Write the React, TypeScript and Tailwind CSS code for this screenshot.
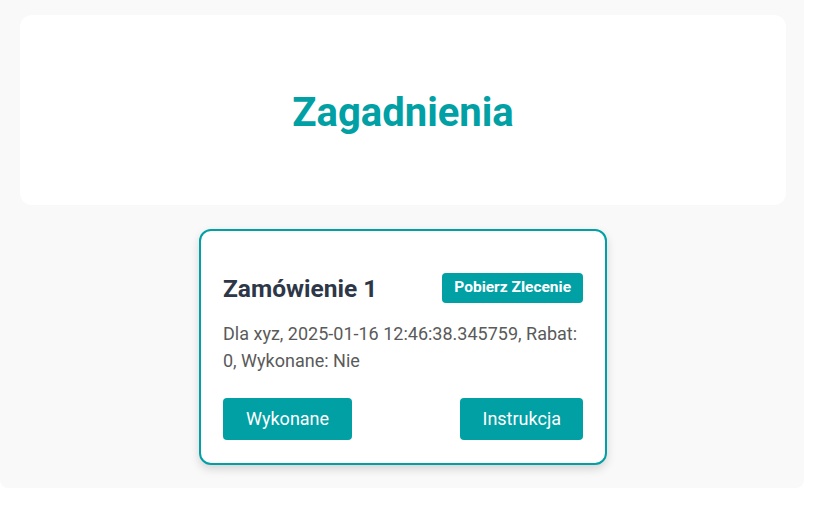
import React from "react";

export default function App() {
  return (
    <div className="w-[818px] h-[509px] bg-white" style={{ fontFamily: "Roboto, 'Noto Sans', sans-serif" }}>
      <div className="w-[804px] h-[488px] bg-[#f9f9f9] rounded-b-lg pt-[15px] pl-[20px] pr-[18px] flex flex-col items-center">
        <div className="w-full h-[190px] bg-white rounded-xl flex items-center justify-center">
          <h1 className="text-[40px] font-bold text-[#00a0a4] leading-none mt-[6px]">Zagadnienia</h1>
        </div>
        <div className="mt-[24px] w-[408px] h-[236px] bg-white border-2 border-[#00a0a4] rounded-xl shadow-[0_4px_10px_rgba(0,0,0,0.15)] px-[22px] pt-[42px]">
          <div className="flex items-center justify-between h-[30px]">
            <h2 className="text-[24.5px] font-bold text-[#2d3748] leading-none mt-[2px]">Zamówienie 1</h2>
            <button className="h-[30px] px-[12px] bg-[#00a0a4] text-white text-[15.5px] font-bold rounded-[4px] leading-none">
              Pobierz Zlecenie
            </button>
          </div>
          <p className="mt-[17px] text-[18px] leading-[27px] text-[#5a5a5a]">
            Dla xyz, 2025-01-16 12:46:38.345759, Rabat: 0, Wykonane: Nie
          </p>
          <div className="mt-[24px] flex justify-between">
            <button className="h-[42px] px-[23px] bg-[#00a0a4] text-white text-[18px] rounded-[4px] leading-none">
              Wykonane
            </button>
            <button className="h-[42px] px-[22px] bg-[#00a0a4] text-white text-[18px] rounded-[4px] leading-none">
              Instrukcja
            </button>
          </div>
        </div>
      </div>
    </div>
  );
}
